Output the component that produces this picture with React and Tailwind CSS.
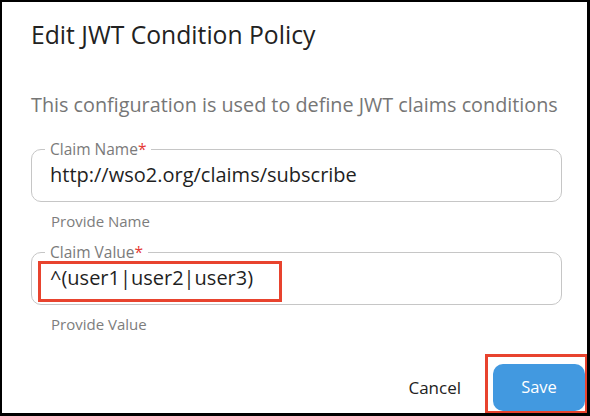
export default function App() {
  const font = { fontFamily: '"Open Sans", "Noto Sans", sans-serif' };
  return (
    <div
      className="relative w-[590px] h-[416px] bg-white border-black border-l-2 border-t-2 border-r-[3px] border-b-[3px] overflow-hidden flex flex-col"
      style={font}
    >
      <div className="pl-[29px] pr-[25px] pt-[17px] flex flex-col">
        <h2 className="text-[24.7px] leading-[32px] text-[#222222] font-normal">
          Edit JWT Condition Policy
        </h2>
        <p className="mt-[40px] text-[19.8px] leading-[28px] text-[#767676] whitespace-nowrap">
          This configuration is used to define JWT claims conditions
        </p>

        <fieldset className="mt-[22px] m-0 border border-[#c6c6c6] rounded-[10px] pl-[18px] pr-[14px] pt-[4px] pb-[12px] min-w-0">
          <legend className="-ml-[5px] px-[5px] text-[15.5px] leading-[16px] text-[#7a7a7a]">
            Claim Name<span className="text-[#e53935]">*</span>
          </legend>
          <div className="text-[20px] leading-[28px] text-[#1f1f1f]">
            http://wso2.org/claims/subscribe
          </div>
        </fieldset>
        <div className="mt-[9px] pl-[20px] text-[15px] leading-[20px] text-[#7d7d7d]">
          Provide Name
        </div>

        <div className="relative mt-[13px]">
          <fieldset className="m-0 border border-[#c6c6c6] rounded-[10px] pl-[18px] pr-[14px] pt-[4px] pb-[12px] min-w-0">
            <legend className="-ml-[5px] px-[5px] text-[15.5px] leading-[16px] text-[#7a7a7a]">
              Claim Value<span className="text-[#e53935]">*</span>
            </legend>
            <div className="text-[20px] leading-[28px] text-[#1f1f1f]">
              ^(user1|user2|user3)
            </div>
          </fieldset>
          <div className="absolute left-[7px] top-[17px] w-[244px] h-[41px] border-[3px] border-[#e8432e]" />
        </div>
        <div className="mt-[9px] pl-[20px] text-[15px] leading-[20px] text-[#7d7d7d]">
          Provide Value
        </div>
      </div>

      <div className="mt-auto pb-[2px] pr-[2px] flex items-center justify-end gap-[16px]">
        <button className="h-[47px] px-[16px] text-[17px] text-[#222222] bg-transparent">
          Cancel
        </button>
        <button className="w-[92px] h-[47px] rounded-[10px] bg-[#4299e0] text-white text-[16.5px]">
          Save
        </button>
      </div>

      <div className="absolute left-[483px] top-[352px] w-[103px] h-[60px] border-[3px] border-[#e8432e] pointer-events-none" />
    </div>
  );
}
